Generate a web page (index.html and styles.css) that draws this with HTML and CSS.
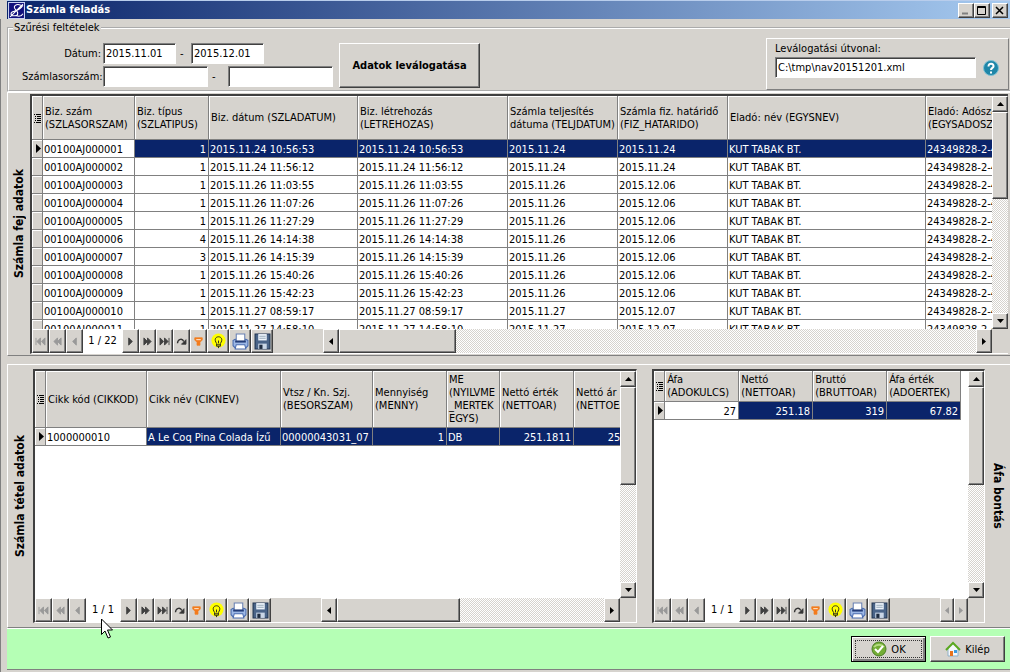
FILE: index.html
```html
<!DOCTYPE html>
<html lang="hu">
<head>
<meta charset="utf-8">
<title>Számla feladás</title>
<link rel="stylesheet" href="styles.css">
</head>
<body>
<svg class="defs" aria-hidden="true">
  <symbol id="first" viewBox="0 0 12 10"><path d="M1 1v8M6 1v8L2 5zM11 1v8L7 5z"/></symbol>
  <symbol id="rew" viewBox="0 0 12 10"><path d="M6 1v8L2 5zM10 1v8L6 5z"/></symbol>
  <symbol id="prev" viewBox="0 0 12 10"><path d="M8 1v8L4 5z"/></symbol>
  <symbol id="next" viewBox="0 0 12 10"><path d="M4 1v8l4-4z"/></symbol>
  <symbol id="fwd" viewBox="0 0 12 10"><path d="M2 1v8l4-4zM6 1v8l4-4z"/></symbol>
  <symbol id="last" viewBox="0 0 12 10"><path d="M1 1v8l4-4zM6 1v8l4-4zM11 1v8"/></symbol>
  <symbol id="redo" viewBox="0 0 12 10"><path d="M1.500 7C2 2 7 1 8.500 5" fill="none" stroke="#333" stroke-width="1.500"/><path d="M6 8h5V3z" fill="#333"/></symbol>
  <symbol id="filter" viewBox="0 0 12 12"><path d="M1 1h10v3L8 7v4H4V7L1 4z" fill="#f47a1c" stroke="#f08020" stroke-width="1"/><path d="M3 3.500h6" stroke="#ffe0c0" stroke-width="1.500"/></symbol>
  <symbol id="bulb" viewBox="0 0 16 18"><circle cx="8" cy="8" r="7.500" fill="#ffff00" stroke="none"/><path d="M6 11C3 7 5 4 8 4s5 3 2 7v3H6zM6 12.500h4M8 14v2M8 8v3" fill="none" stroke="#222"/></symbol>
  <symbol id="print" viewBox="0 0 16 16"><path d="M1 7l2-1h10l2 1v5l-2 2H3l-2-2z" fill="#9db8e6" stroke="#4a6cb0"/><path d="M4 1h8v7H4z" fill="#fff" stroke="#6a82b4"/><path d="M3 8h10" stroke="#223c78" stroke-width="2"/><path d="M4 11h8l1 4H3z" fill="#fff" stroke="#4a6cb0"/></symbol>
  <symbol id="save" viewBox="0 0 16 16"><path d="M1 1h14v14H1z" fill="#4a6488" stroke="#1e3350"/><path d="M4 1h8v6H4z" fill="#eef4fb" stroke="none"/><path d="M5 3h6M5 5h6" stroke="#9ab"/><path d="M4 10h8v5H4z" fill="#c9d6e6" stroke="none"/><path d="M5 11h3v4H5z" fill="#1e2c40" stroke="none"/></symbol>
  <symbol id="up" viewBox="0 0 7 4"><path d="M0 4h7L3.500 0z" stroke="none"/></symbol>
  <symbol id="down" viewBox="0 0 7 4"><path d="M0 0h7L3.500 4z" stroke="none"/></symbol>
  <symbol id="left" viewBox="0 0 4 7"><path d="M4 0v7L0 3.500z" stroke="none"/></symbol>
  <symbol id="right" viewBox="0 0 4 7"><path d="M0 0v7l4-3.500z" stroke="none"/></symbol>
  <symbol id="menu" viewBox="0 0 7 10"><path d="M0 1.500h1M2 1.500h5M1 3.500h1M3 3.500h4M1 5.500h1M3 5.500h4M1 7.500h1M3 7.500h4M0 9.500h1M2 9.500h5" stroke="#000"/></symbol>
  <symbol id="row" viewBox="0 0 5 9"><path d="M0 0v9l5-4.500z" stroke="none" fill="#000"/></symbol>
</svg>

<header class="titlebar">
  <svg class="logo" viewBox="0 0 16 16"><path d="M.5.500h15v15H.500z" fill="#10107c" stroke="#c8d0f0"/><path d="M2 14L14 2M12 3C8 1 4 4 7 7s3 6-1 6-4-3-1-4 7-2 9-6M8 13c3 1 5 0 6-2" fill="none" stroke="#fff"/></svg>
  <h1>Számla feladás</h1>
  <div class="winbtns">
    <button class="raised" aria-label="Kis méret"><svg width="10" height="9"><path d="M1 7.500h6" stroke="#808080" stroke-width="2"/></svg></button>
    <button class="raised" aria-label="Teljes méret"><svg width="10" height="9"><path d="M.5.500h8v8h-8zM.5 1.500h8" fill="none" stroke="#000"/></svg></button>
    <button class="raised close" aria-label="Bezárás"><svg width="10" height="9"><path d="M1 1l7 7M8 1L1 8" stroke="#000" stroke-width="1.500"/></svg></button>
  </div>
</header>

<main class="window">
  <fieldset class="filters">
    <legend>Szűrési feltételek</legend>
    <div class="filter-row">
      <div class="ranges">
        <label for="d1">Dátum:</label>
        <div class="range dates"><input id="d1" value="2015.11.01"><span>-</span><input aria-label="Dátum vége" value="2015.12.01"></div>
        <label for="s1">Számlasorszám:</label>
        <div class="range serials"><input id="s1"><span>-</span><input aria-label="Számlasorszám vége"></div>
      </div>
      <button class="raised run">Adatok leválogatása</button>
      <div class="path-box">
        <label for="path">Leválogatási útvonal:</label>
        <div class="path-row">
          <input id="path" value="C:\tmp\nav20151201.xml">
          <button class="help" aria-label="Súgó"><svg width="16" height="16" viewBox="0 0 16 16"><circle cx="8" cy="8" r="7.500" fill="#1f86a8" stroke="#7cc0d4"/><path d="M5.500 6.500c0-4 5.500-3.500 5 0C10.300 8 8 8 8 10M8 11.500v2" fill="none" stroke="#fff" stroke-width="2"/></svg></button>
        </div>
      </div>
    </div>
  </fieldset>

  <section class="panel panel-head">
    <h2 class="side">Számla fej adatok</h2>
    <div class="grid">
      <div class="grid-body">
        <div class="viewport">
          <table class="heads">
            <colgroup><col class="w11"><col class="w92"><col class="w74"><col class="w149"><col class="w150"><col class="w110"><col class="w110"><col class="w198"><col class="w110"></colgroup>
            <thead><tr><th><svg class="menu"><use href="#menu"/></svg></th><th>Biz. szám<br>(SZLASORSZAM)</th><th>Biz. típus<br>(SZLATIPUS)</th><th>Biz. dátum (SZLADATUM)</th><th>Biz. létrehozás<br>(LETREHOZAS)</th><th>Számla teljesítés<br>dátuma (TELJDATUM)</th><th>Számla fiz. határidő<br>(FIZ_HATARIDO)</th><th>Eladó: név (EGYSNEV)</th><th>Eladó: Adószám<br>(EGYSADOSZAM)</th></tr></thead>
            <tbody>
              <tr class="sel"><th><svg class="row"><use href="#row"/></svg></th><td>00100AJ000001</td><td class="num">1</td><td>2015.11.24 10:56:53</td><td>2015.11.24 10:56:53</td><td>2015.11.24</td><td>2015.11.24</td><td>KUT TABAK BT.</td><td>24349828-2-41</td></tr>
              <tr><th></th><td>00100AJ000002</td><td class="num">1</td><td>2015.11.24 11:56:12</td><td>2015.11.24 11:56:12</td><td>2015.11.24</td><td>2015.11.24</td><td>KUT TABAK BT.</td><td>24349828-2-41</td></tr>
              <tr><th></th><td>00100AJ000003</td><td class="num">1</td><td>2015.11.26 11:03:55</td><td>2015.11.26 11:03:55</td><td>2015.11.26</td><td>2015.12.06</td><td>KUT TABAK BT.</td><td>24349828-2-41</td></tr>
              <tr><th></th><td>00100AJ000004</td><td class="num">1</td><td>2015.11.26 11:07:26</td><td>2015.11.26 11:07:26</td><td>2015.11.26</td><td>2015.12.06</td><td>KUT TABAK BT.</td><td>24349828-2-41</td></tr>
              <tr><th></th><td>00100AJ000005</td><td class="num">1</td><td>2015.11.26 11:27:29</td><td>2015.11.26 11:27:29</td><td>2015.11.26</td><td>2015.12.06</td><td>KUT TABAK BT.</td><td>24349828-2-41</td></tr>
              <tr><th></th><td>00100AJ000006</td><td class="num">4</td><td>2015.11.26 14:14:38</td><td>2015.11.26 14:14:38</td><td>2015.11.26</td><td>2015.12.06</td><td>KUT TABAK BT.</td><td>24349828-2-41</td></tr>
              <tr><th></th><td>00100AJ000007</td><td class="num">3</td><td>2015.11.26 14:15:39</td><td>2015.11.26 14:15:39</td><td>2015.11.26</td><td>2015.12.06</td><td>KUT TABAK BT.</td><td>24349828-2-41</td></tr>
              <tr><th></th><td>00100AJ000008</td><td class="num">1</td><td>2015.11.26 15:40:26</td><td>2015.11.26 15:40:26</td><td>2015.11.26</td><td>2015.12.06</td><td>KUT TABAK BT.</td><td>24349828-2-41</td></tr>
              <tr><th></th><td>00100AJ000009</td><td class="num">1</td><td>2015.11.26 15:42:23</td><td>2015.11.26 15:42:23</td><td>2015.11.26</td><td>2015.12.06</td><td>KUT TABAK BT.</td><td>24349828-2-41</td></tr>
              <tr><th></th><td>00100AJ000010</td><td class="num">1</td><td>2015.11.27 08:59:17</td><td>2015.11.27 08:59:17</td><td>2015.11.27</td><td>2015.12.07</td><td>KUT TABAK BT.</td><td>24349828-2-41</td></tr>
              <tr><th></th><td>00100AJ000011</td><td class="num">1</td><td>2015.11.27 14:58:10</td><td>2015.11.27 14:58:10</td><td>2015.11.27</td><td>2015.12.07</td><td>KUT TABAK BT.</td><td>24349828-2-41</td></tr>
            </tbody>
          </table>
        </div>
        <div class="vscroll"><button class="raised" aria-label="Fel"><svg class="v"><use href="#up"/></svg></button><div class="raised thumb"></div><button class="raised end" aria-label="Le"><svg class="v"><use href="#down"/></svg></button></div>
      </div>
      <div class="grid-foot">
        <div class="nav">
          <button class="raised" disabled aria-label="Első"><svg><use href="#first"/></svg></button><button class="raised" disabled aria-label="Előző lap"><svg><use href="#rew"/></svg></button><button class="raised" disabled aria-label="Előző"><svg><use href="#prev"/></svg></button><output>1 / 22</output><button class="raised" aria-label="Következő"><svg><use href="#next"/></svg></button><button class="raised" aria-label="Következő lap"><svg><use href="#fwd"/></svg></button><button class="raised" aria-label="Utolsó"><svg><use href="#last"/></svg></button><button class="raised" aria-label="Frissítés"><svg><use href="#redo"/></svg></button><button class="raised" aria-label="Szűrő"><svg><use href="#filter"/></svg></button><button class="raised big" aria-label="Ötlet"><svg><use href="#bulb"/></svg></button><button class="raised big" aria-label="Nyomtatás"><svg><use href="#print"/></svg></button><button class="raised big" aria-label="Mentés"><svg><use href="#save"/></svg></button>
        </div>
        <div class="hscroll"><button class="raised" aria-label="Balra"><svg class="h"><use href="#left"/></svg></button><div class="raised thumb"></div><button class="raised end" aria-label="Jobbra"><svg class="h"><use href="#right"/></svg></button></div>
      </div>
    </div>
  </section>

  <section class="panel panel-items">
    <h2 class="side">Számla tétel adatok</h2>
    <div class="grid items">
      <div class="grid-body">
        <div class="viewport">
          <table class="lines">
            <colgroup><col class="w11"><col class="w101"><col class="w134"><col class="w92"><col class="w74"><col class="w53"><col class="w74"><col class="w84"></colgroup>
            <thead><tr><th><svg class="menu"><use href="#menu"/></svg></th><th>Cikk kód (CIKKOD)</th><th>Cikk név (CIKNEV)</th><th>Vtsz / Kn. Szj.<br>(BESORSZAM)</th><th>Mennyiség<br>(MENNY)</th><th>ME<br>(NYILVME<br>_MERTEK<br>EGYS)</th><th>Nettó érték<br>(NETTOAR)</th><th>Nettó ár<br>(NETTOEAR)</th></tr></thead>
            <tbody><tr class="sel"><th><svg class="row"><use href="#row"/></svg></th><td>1000000010</td><td>A Le Coq Pina Colada Ízű</td><td>00000043031_07</td><td class="num">1</td><td>DB</td><td class="num">251.1811</td><td class="num">251.1811</td></tr></tbody>
          </table>
        </div>
        <div class="vscroll"><button class="raised" aria-label="Fel"><svg class="v"><use href="#up"/></svg></button><div class="raised thumb"></div><button class="raised end" aria-label="Le"><svg class="v"><use href="#down"/></svg></button></div>
      </div>
      <div class="grid-foot">
        <div class="nav">
          <button class="raised" disabled aria-label="Első"><svg><use href="#first"/></svg></button><button class="raised" disabled aria-label="Előző lap"><svg><use href="#rew"/></svg></button><button class="raised" disabled aria-label="Előző"><svg><use href="#prev"/></svg></button><output>1 / 1</output><button class="raised" aria-label="Következő"><svg><use href="#next"/></svg></button><button class="raised" aria-label="Következő lap"><svg><use href="#fwd"/></svg></button><button class="raised" aria-label="Utolsó"><svg><use href="#last"/></svg></button><button class="raised" aria-label="Frissítés"><svg><use href="#redo"/></svg></button><button class="raised" aria-label="Szűrő"><svg><use href="#filter"/></svg></button><button class="raised big" aria-label="Ötlet"><svg><use href="#bulb"/></svg></button><button class="raised big" aria-label="Nyomtatás"><svg><use href="#print"/></svg></button><button class="raised big" aria-label="Mentés"><svg><use href="#save"/></svg></button>
        </div>
        <div class="hscroll wide"><button class="raised" aria-label="Balra"><svg class="h"><use href="#left"/></svg></button><div class="raised thumb"></div><button class="raised end" aria-label="Jobbra"><svg class="h"><use href="#right"/></svg></button></div>
      </div>
    </div>
    <div class="grid vat">
      <div class="grid-body">
        <div class="viewport">
          <table class="vats">
            <colgroup><col class="w11"><col class="w74"><col class="w74"><col class="w74"><col class="w74"></colgroup>
            <thead><tr><th><svg class="menu"><use href="#menu"/></svg></th><th>Áfa<br>(ADOKULCS)</th><th>Nettó<br>(NETTOAR)</th><th>Bruttó<br>(BRUTTOAR)</th><th>Áfa érték<br>(ADOERTEK)</th></tr></thead>
            <tbody><tr class="sel"><th><svg class="row"><use href="#row"/></svg></th><td class="num">27</td><td class="num">251.18</td><td class="num">319</td><td class="num">67.82</td></tr></tbody>
          </table>
        </div>
        <div class="vscroll"><button class="raised" aria-label="Fel"><svg class="v"><use href="#up"/></svg></button><div class="raised thumb"></div><button class="raised end" aria-label="Le"><svg class="v"><use href="#down"/></svg></button></div>
      </div>
      <div class="grid-foot">
        <div class="nav">
          <button class="raised" disabled aria-label="Első"><svg><use href="#first"/></svg></button><button class="raised" disabled aria-label="Előző lap"><svg><use href="#rew"/></svg></button><button class="raised" disabled aria-label="Előző"><svg><use href="#prev"/></svg></button><output>1 / 1</output><button class="raised" aria-label="Következő"><svg><use href="#next"/></svg></button><button class="raised" aria-label="Következő lap"><svg><use href="#fwd"/></svg></button><button class="raised" aria-label="Utolsó"><svg><use href="#last"/></svg></button><button class="raised" aria-label="Frissítés"><svg><use href="#redo"/></svg></button><button class="raised" aria-label="Szűrő"><svg><use href="#filter"/></svg></button><button class="raised big" aria-label="Ötlet"><svg><use href="#bulb"/></svg></button><button class="raised big" aria-label="Nyomtatás"><svg><use href="#print"/></svg></button><button class="raised big" aria-label="Mentés"><svg><use href="#save"/></svg></button>
        </div>
        <div class="hscroll"><button class="raised" disabled aria-label="Balra"><svg class="h"><use href="#left"/></svg></button><button class="raised end" disabled aria-label="Jobbra"><svg class="h"><use href="#right"/></svg></button></div>
      </div>
    </div>
    <h2 class="side side-right">Áfa bontás</h2>
  </section>

  <footer class="actions">
    <button class="raised default"><svg width="16" height="16" viewBox="0 0 16 16"><circle cx="8" cy="8" r="7" fill="#73ad35" stroke="#4b7f25"/><path d="M3 6a6 5 0 0 1 10 0" fill="none" stroke="#b4dc80" stroke-width="2"/><path d="M4 8l3 3 5-6" fill="none" stroke="#fff" stroke-width="2"/></svg>OK</button>
    <button class="raised"><svg width="16" height="16" viewBox="0 0 16 16"><path d="M3 7l5-5 5 5v8H3z" fill="#f4f8fb" stroke="#8fb0c8"/><path d="M1 9l7-7 7 7" fill="none" stroke="#5aa820" stroke-width="2"/><path d="M5 10h3v5H5z" fill="#e8731c"/><path d="M9 9h3v3H9z" fill="#3d9be0"/></svg>Kilép</button>
  </footer>
</main>

<svg class="cursor" width="13" height="21" viewBox="0 0 13 21"><path d="M.5 1v15.500l3.500-3.500 3 7 2.500-1-3-7h5z" fill="#fff" stroke="#000"/></svg>
</body>
</html>
```

FILE: styles.css
```css
:root {
  --face: #d6d3ce;
  --shadow: #808080;
  --dark: #404040;
  --navy: #0a246a;
}

* { box-sizing: border-box; }

body {
  margin: 0;
  height: 100vh;
  display: flex;
  flex-direction: column;
  background: var(--face);
  color: #000;
  font: 11px/13px "DejaVu Sans Condensed", Tahoma, "DejaVu Sans", sans-serif;
  overflow: hidden;
}

.defs { position: absolute; width: 0; height: 0; }

button, input { font: inherit; color: inherit; }

button {
  display: flex;
  align-items: center;
  justify-content: center;
  padding: 0;
  border: 0;
  background: var(--face);
}

button svg { flex: none; }

.raised {
  background: var(--face);
  border: 1px solid;
  border-color: #fff var(--dark) var(--dark) #fff;
  box-shadow: inset -1px -1px var(--shadow);
}

input {
  height: 21px;
  padding: 0 2px;
  border: 1px solid;
  border-color: var(--shadow) #fff #fff var(--shadow);
  border-radius: 0;
  background: #fff;
  box-shadow: inset 1px 1px var(--dark);
  min-width: 0;
}

/* Title bar */
.titlebar {
  flex: none;
  display: flex;
  align-items: center;
  gap: 1px;
  height: 19px;
  margin-left: 7px;
  padding: 0 2px 0 1px;
  border-top: 1px solid #b8cdec;
  background: linear-gradient(90deg, #0a246a, #a6caf0);
}

.logo { width: 17px; height: 17px; }

h1 {
  flex: 1;
  margin: 0;
  color: #fff;
  font: bold 11px/14px "DejaVu Sans Condensed", Tahoma, sans-serif;
}

.winbtns { display: flex; }
.winbtns button { width: 16px; height: 15px; }
.winbtns .close { margin-left: 2px; }

.window {
  flex: 1;
  min-height: 0;
  display: flex;
  flex-direction: column;
  border-left: 1px solid var(--shadow);
  padding: 0 0 2px 6px;
}

/* Filters */
.filters {
  flex: none;
  margin: 2px 0 0;
  padding: 0;
  border: 2px groove #fff;
  border-right: 0;
  min-width: 0;
}

.filters legend { margin-left: 4px; padding: 0 1px; }

.filter-row {
  display: flex;
  align-items: flex-start;
  padding: 4px 0 0 13px;
}

.ranges {
  display: grid;
  grid-template-columns: 79px auto;
  gap: 2px;
  align-items: center;
  padding-top: 5px;
}

.ranges label { text-align: right; }
.range { display: flex; align-items: center; }
.range span { padding-left: 4px; }
.dates input { width: 73px; }
.dates span { width: 15px; }
.serials input { width: 105px; }
.serials span { width: 20px; }

.run {
  width: 141px;
  height: 45px;
  margin: 5px 0 0 6px;
  font-weight: bold;
}

.path-box {
  width: 243px;
  height: 52px;
  margin: 0 1px 0 auto;
  padding: 3px 0 0 8px;
  border: 1px solid;
  border-color: #fff var(--shadow) var(--shadow) #fff;
}

.path-row { display: flex; align-items: center; gap: 7px; margin-top: 2px; }
.path-row input { width: 201px; }
.help { border-radius: 50%; }

/* Panels */
.panel {
  display: flex;
  flex: 1 1 10px;
  min-height: 0;
  border-left: 1px solid #fff;
  border-bottom: 1px solid var(--shadow);
}

.panel-head { padding: 1px 2px 1px 0; border-top: 1px solid #fff; }
.panel-items { margin-top: 8px; padding: 4px 0; border-top: 1px solid #fff; }

.side {
  flex: none;
  width: 22px;
  margin: 0;
  writing-mode: vertical-rl;
  transform: rotate(180deg);
  text-align: center;
  font: bold 12px/22px "DejaVu Sans Condensed", Verdana, sans-serif;
}

.panel-items .side { width: 25px; line-height: 25px; }
.side-right { transform: none; }

.grid {
  display: flex;
  flex-direction: column;
  min-width: 0;
  flex: 1;
  border: solid;
  border-width: 2px 1px 1px 2px;
  border-color: var(--dark) #fff #fff var(--dark);
}

.panel-head .grid { border-right-width: 0; }
.items { flex: 605 1 0; }
.vat { flex: 332 1 0; margin-left: 15px; }

.grid-body { flex: 1; min-height: 0; display: flex; background: #fff; }
.viewport { flex: 1; min-width: 0; overflow: hidden; }

table {
  table-layout: fixed;
  width: 0;
  border-spacing: 0;
}

.w11 { width: 11px; }
.w53 { width: 53px; }
.w74 { width: 74px; }
.w84 { width: 84px; }
.w92 { width: 92px; }
.w101 { width: 101px; }
.w110 { width: 110px; }
.w134 { width: 134px; }
.w149 { width: 149px; }
.w150 { width: 150px; }
.w198 { width: 198px; }

th, td {
  height: 18px;
  padding: 0 2px;
  border: solid var(--shadow);
  border-width: 0 1px 1px 0;
  font-weight: normal;
  text-align: left;
  white-space: nowrap;
  overflow: hidden;
}

th { background: var(--face); box-shadow: inset 1px 1px #fff; }
td { padding: 1px 2px 0 1px; }
.heads thead th { height: 44px; }
.lines thead th { height: 57px; }
.vats thead th { height: 31px; }
.num { text-align: right; }

.sel td { background: var(--navy); color: #fff; }
.sel th + td { background: #fff; color: #000; }

.menu { display: block; width: 7px; height: 10px; }
.row { display: block; width: 5px; height: 9px; margin-left: 2px; }

/* Scroll bars */
.vscroll, .hscroll {
  display: flex;
  background: conic-gradient(#fff 25%, var(--face) 0 50%, #fff 0 75%, var(--face) 0) 0 0 / 2px 2px;
}

.vscroll { flex: none; flex-direction: column; width: 16px; }
.vscroll button { height: 16px; }
.vscroll .thumb { height: 98px; }
.vscroll .end { margin-top: auto; }
.panel-head .vscroll .thumb { height: 87px; }

.hscroll { flex: 1; margin: 0 16px 0 50px; }
.hscroll button { width: 16px; }
.hscroll .thumb { width: 117px; }
.hscroll.wide .thumb { width: 123px; }
.hscroll .end { margin-left: auto; }
.vat .hscroll button { flex: 1; width: auto; }

.v { width: 7px; height: 4px; }
.h { width: 4px; height: 7px; }

.grid-foot { flex: none; display: flex; height: 24px; }

/* Record navigator */
.nav { display: flex; flex: none; }
.nav button { width: 17px; fill: #404040; stroke: #404040; }
.nav button:disabled, .hscroll button:disabled { fill: #999; stroke: #999; }
.nav .big { width: 22px; }
.nav svg { width: 11px; height: 9px; }
.nav .big svg { width: 17px; height: 17px; }
.nav output { width: 34px; background: #fff; text-align: center; line-height: 24px; }
.panel-head .nav output { width: 39px; }

/* Bottom bar */
.actions {
  flex: none;
  display: flex;
  justify-content: flex-end;
  gap: 4px;
  padding: 7px 5px;
  border: solid;
  border-width: 1px 0;
  border-color: #fff transparent var(--shadow);
  background: #b5ffb5;
}

.actions button { width: 75px; height: 26px; gap: 4px; }

.default {
  border-color: #000;
  outline: 1px dotted #333;
  outline-offset: -5px;
  box-shadow: inset 1px 1px #fff, inset -2px -2px var(--shadow);
}

.cursor { position: absolute; left: 101px; top: 618px; }
```
